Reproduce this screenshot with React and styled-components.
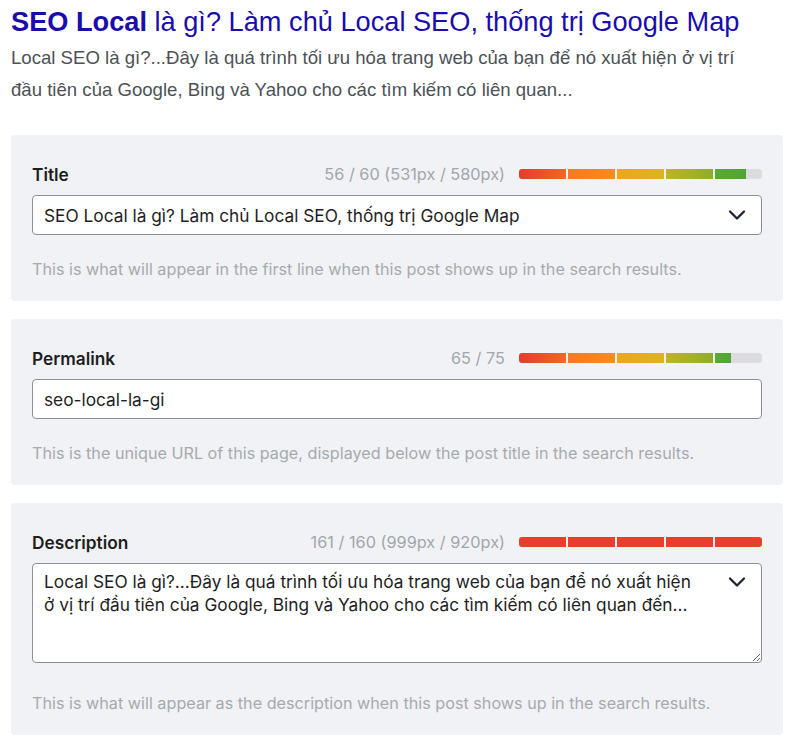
import styled, { createGlobalStyle } from "styled-components";

const GlobalStyle = createGlobalStyle`
  body {
    margin: 0;
    background: #ffffff;
    font-family: Inter, "Noto Sans", sans-serif;
  }
`;

const Page = styled.div`
  width: 800px;
  padding: 6px 17px 0 11px;
  box-sizing: border-box;
`;

const Preview = styled.div`
  margin-bottom: 29px;
`;

const PreviewTitle = styled.div`
  font-family: "Liberation Sans", Arial, sans-serif;
  font-size: 27.2px;
  line-height: 32px;
  color: #1a0dab;
  white-space: nowrap;
  b {
    font-weight: 700;
  }
`;

const PreviewText = styled.p`
  margin: 4px 0 0;
  font-family: "Liberation Sans", Arial, sans-serif;
  font-size: 18.6px;
  line-height: 32px;
  color: #4d5156;
  white-space: nowrap;
`;

const Panel = styled.section`
  background: #f0f2f5;
  border-radius: 4px;
  padding: 29px 21px 22px;
  margin-bottom: 18px;
`;

const LabelRow = styled.div`
  display: flex;
  align-items: center;
  height: 20px;
  margin-bottom: 11px;
`;

const Label = styled.label`
  flex: 1;
  font-size: 17.3px;
  font-weight: 600;
  color: #1e1e1e;
`;

const Counter = styled.span`
  font-size: 16.3px;
  color: #a2a6ab;
  margin-right: 14px;
`;

const Track = styled.div`
  display: flex;
  gap: 2px;
  width: 243px;
  height: 10px;
`;

const Segment = styled.div`
  flex: 1;
  background: #dcdcde;
  overflow: hidden;
  &:first-child {
    border-radius: 3px 0 0 3px;
  }
  &:last-child {
    border-radius: 0 3px 3px 0;
  }
`;

const Fill = styled.div`
  height: 100%;
  background: ${p => p.$color};
`;

const Field = styled.div`
  position: relative;
`;

const Input = styled.input`
  display: block;
  width: 100%;
  box-sizing: border-box;
  height: 40px;
  padding: 0 50px 0 11px;
  border: 1px solid #8c8f94;
  border-radius: 4px;
  background: #fff;
  font-family: Inter, "Noto Sans", sans-serif;
  font-size: 17.3px;
  color: #1e1e1e;
  outline: none;
`;

const TextArea = styled.textarea`
  display: block;
  width: 100%;
  box-sizing: border-box;
  height: 100px;
  padding: 6px 62px 0 11px;
  border: 1px solid #8c8f94;
  border-radius: 4px;
  background: #fff;
  font-family: Inter, "Noto Sans", sans-serif;
  font-size: 17.3px;
  line-height: 23px;
  color: #1e1e1e;
  outline: none;
  resize: vertical;
`;

const Chevron = styled.svg`
  position: absolute;
  right: 16px;
  top: ${p => p.$top}px;
`;

const Help = styled.p`
  margin: ${p => p.$gap}px 0 0;
  font-size: 16.2px;
  line-height: 20px;
  color: #a7aaad;
  white-space: nowrap;
`;

const GOOD = [
  "linear-gradient(to right, #e53b2b, #ee6a28)",
  "linear-gradient(to right, #f47a22, #f58c22)",
  "linear-gradient(to right, #eea521, #dcb325)",
  "linear-gradient(to right, #c2b22a, #8cae2c)",
  "linear-gradient(to right, #5aab35, #4fa534)",
];
const BAD = "#e5402b";

function Meter({ pct, over }) {
  return (
    <Track>
      {GOOD.map((c, i) => {
        const f = Math.max(0, Math.min(1, pct * 5 - i));
        return (
          <Segment key={i}>
            <Fill $color={over ? BAD : c} style={{ width: `${f * 100}%` }} />
          </Segment>
        );
      })}
    </Track>
  );
}

function DownIcon({ top }) {
  return (
    <Chevron $top={top} width="18" height="12" viewBox="0 0 18 12">
      <polyline points="2,2.5 9,9.5 16,2.5" fill="none" stroke="#1d2533" strokeWidth="2.3" strokeLinecap="round" strokeLinejoin="round" />
    </Chevron>
  );
}

export default function App() {
  return (
    <Page>
      <GlobalStyle />
      <Preview>
        <PreviewTitle>
          <b>SEO Local</b> là gì? Làm chủ Local SEO, thống trị Google Map
        </PreviewTitle>
        <PreviewText>
          Local SEO là gì?...Đây là quá trình tối ưu hóa trang web của bạn để nó xuất hiện ở vị trí
          <br />
          đầu tiên của Google, Bing và Yahoo cho các tìm kiếm có liên quan...
        </PreviewText>
      </Preview>

      <Panel>
        <LabelRow>
          <Label>Title</Label>
          <Counter>56 / 60 (531px / 580px)</Counter>
          <Meter pct={0.93} />
        </LabelRow>
        <Field>
          <Input readOnly value="SEO Local là gì? Làm chủ Local SEO, thống trị Google Map" />
          <DownIcon top={14} />
        </Field>
        <Help $gap={24}>This is what will appear in the first line when this post shows up in the search results.</Help>
      </Panel>

      <Panel>
        <LabelRow>
          <Label>Permalink</Label>
          <Counter>65 / 75</Counter>
          <Meter pct={0.866} />
        </LabelRow>
        <Field>
          <Input readOnly value="seo-local-la-gi" />
        </Field>
        <Help $gap={24}>This is the unique URL of this page, displayed below the post title in the search results.</Help>
      </Panel>

      <Panel>
        <LabelRow>
          <Label>Description</Label>
          <Counter>161 / 160 (999px / 920px)</Counter>
          <Meter pct={1} over />
        </LabelRow>
        <Field>
          <TextArea
            readOnly
            value="Local SEO là gì?...Đây là quá trình tối ưu hóa trang web của bạn để nó xuất hiện ở vị trí đầu tiên của Google, Bing và Yahoo cho các tìm kiếm có liên quan đến..."
          />
          <DownIcon top={13} />
        </Field>
        <Help $gap={30}>This is what will appear as the description when this post shows up in the search results.</Help>
      </Panel>
    </Page>
  );
}
